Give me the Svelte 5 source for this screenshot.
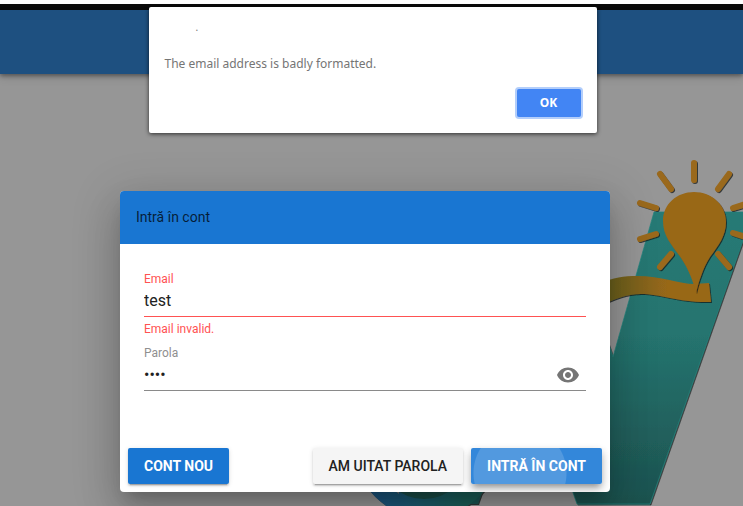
<script>
  let email = $state('test');
  let password = $state('pass');
  let visible = $state(false);

  const rays = [
    [694, 163, 694, 180],
    [660, 174, 671, 189],
    [729, 174, 718, 189],
    [640, 203, 656, 208],
    [640, 239, 656, 234],
    [671, 254, 660, 267],
    [718, 254, 729, 267],
    [733, 208, 749, 203],
    [733, 233, 749, 238]
  ];
</script>

<div class="page">
  <div class="browser-edge"></div>
  <header class="toolbar"></header>

  <svg class="art" viewBox="360 150 383 356" aria-hidden="true">
    <defs>
      <linearGradient id="teal" x1="0" y1="0" x2="0" y2="1">
        <stop offset="0" stop-color="#267a75" />
        <stop offset=".42" stop-color="#25746f" />
        <stop offset="1" stop-color="#1d524f" />
      </linearGradient>
      <linearGradient id="ribbon" gradientUnits="userSpaceOnUse" x1="606" y1="0" x2="668" y2="0">
        <stop offset="0" stop-color="#67601f" />
        <stop offset="1" stop-color="#986719" />
      </linearGradient>
      <linearGradient id="ring" gradientUnits="userSpaceOnUse" x1="368" y1="0" x2="465" y2="0">
        <stop offset="0" stop-color="#1c5583" />
        <stop offset=".4" stop-color="#1c5a74" />
        <stop offset="1" stop-color="#1f5f58" />
      </linearGradient>
      <filter id="edge" x="-20%" y="-20%" width="150%" height="150%">
        <feDropShadow dx="1" dy="1" stdDeviation=".6" flood-color="#161a1a" flood-opacity=".75" />
      </filter>
    </defs>
    <g filter="url(#edge)">
      <path d="M654 212H753L650 504H577L540 400L590 290L613 357Z" fill="url(#teal)" stroke="#22857e" stroke-width=".7" />
      <path d="M430 400H515L478 504H430Z" fill="#1e5552" />
      <circle cx="427" cy="444" r="74" fill="url(#ring)" />
      <ellipse cx="424" cy="459" rx="43" ry="40" fill="#1b4f48" />
      <path d="M394 490h5v4z" fill="#777" />
    </g>
    <path
      d="M600 284C613 277 624 276 637 276C661 276 680 284 694 284L709 283L711 302C680 303 661 294 641 294C626 294 614 299 600 306Z"
      fill="url(#ribbon)"
      filter="url(#edge)"
    />
    <g stroke="#9a691b" stroke-width="6" stroke-linecap="round" filter="url(#edge)">
      {#each rays as [x1, y1, x2, y2]}
        <line {x1} {y1} {x2} {y2} />
      {/each}
    </g>
    <path
      d="M694 192C712 192 726 205 726 222C726 236 718 246 710 257C703 268 699 281 696 293C693 281 689 270 681 258C671 244 663 236 663 221C663 204 677 192 694 192Z"
      fill="#996719"
      filter="url(#edge)"
    />
  </svg>

  <main class="stage">
    <form class="card" novalidate onsubmit={(event) => event.preventDefault()}>
      <h1>Intră în cont</h1>
      <div class="fields">
        <div class="field invalid">
          <label for="email">Email</label>
          <div class="control">
            <input id="email" type="email" bind:value={email} aria-invalid="true" aria-describedby="email-error" />
          </div>
          <p id="email-error">Email invalid.</p>
        </div>
        <div class="field">
          <label for="password">Parola</label>
          <div class="control">
            <input id="password" type={visible ? 'text' : 'password'} bind:value={password} />
            <button class="eye" type="button" aria-label="Arată parola" onclick={() => (visible = !visible)}>
              <svg viewBox="0 0 24 24" aria-hidden="true">
                <path
                  d="M12 4.5C7 4.5 2.73 7.61 1 12c1.73 4.39 6 7.5 11 7.5s9.27-3.11 11-7.5c-1.73-4.39-6-7.5-11-7.5zM12 17c-2.76 0-5-2.24-5-5s2.24-5 5-5 5 2.24 5 5-2.24 5-5 5zm0-8c-1.66 0-3 1.34-3 3s1.34 3 3 3 3-1.34 3-3-1.34-3-3-3z"
                />
              </svg>
            </button>
          </div>
        </div>
      </div>
      <div class="actions">
        <button class="btn primary" type="button">Cont nou</button>
        <span class="spacer"></span>
        <button class="btn" type="button">Am uitat parola</button>
        <button class="btn primary pressed" type="submit">Intră în cont</button>
      </div>
    </form>
  </main>

  <div class="alert" role="alertdialog" aria-labelledby="alert-title" aria-describedby="alert-text">
    <div class="alert-title" id="alert-title">.</div>
    <p id="alert-text">The email address is badly formatted.</p>
    <button type="button">OK</button>
  </div>
</div>

<style>
  :global(body) {
    margin: 0;
  }
  .page {
    position: relative;
    min-height: 100vh;
    overflow: hidden;
    background: #969696;
    font-family: Roboto, 'Liberation Sans', sans-serif;
    box-sizing: border-box;
  }
  .page :global(*) {
    box-sizing: border-box;
  }
  .browser-edge {
    height: 10px;
    border-top: 4px solid #fff;
    background: #0b0b0b;
  }
  .toolbar {
    height: 64px;
    background: #1e5080;
    box-shadow: 0 2px 4px rgba(0, 0, 0, 0.35), 0 3px 9px rgba(0, 0, 0, 0.15);
  }
  .art {
    position: absolute;
    top: 150px;
    right: 0;
    width: 383px;
    height: 356px;
  }
  .stage {
    position: relative;
    display: flex;
    justify-content: center;
    padding: 117px 13px 14px 0;
  }
  .card {
    width: 490px;
    max-width: 100%;
    border-radius: 4px;
    overflow: hidden;
    background: #fff;
    box-shadow:
      0 11px 15px -7px rgba(0, 0, 0, 0.2),
      0 24px 38px 3px rgba(0, 0, 0, 0.14),
      0 9px 46px 8px rgba(0, 0, 0, 0.12);
  }
  h1 {
    margin: 0;
    padding: 16px;
    background: #1976d2;
    color: rgba(0, 0, 0, 0.75);
    font-size: 14px;
    font-weight: 400;
    line-height: 21px;
  }
  .fields {
    padding: 24px;
  }
  .field {
    height: 74px;
    padding-top: 4px;
    color: #8f8f8f;
  }
  label,
  .field p {
    display: block;
    margin: 0;
    font-size: 12px;
    line-height: 14px;
  }
  .field p {
    padding-top: 5px;
  }
  .control {
    display: flex;
    align-items: center;
    height: 31px;
    border-bottom: 1px solid #8a8a8a;
  }
  .invalid {
    color: #ff5252;
  }
  .invalid .control {
    border-color: #ff5252;
  }
  input {
    flex: 1;
    min-width: 0;
    height: 30px;
    padding: 0 0 2px;
    border: 0;
    outline: 0;
    background: none;
    color: #212121;
    font: 16px/28px Roboto, 'Liberation Sans', sans-serif;
  }
  .eye {
    width: 24px;
    height: 24px;
    margin-right: 6px;
    padding: 0;
    border: 0;
    background: none;
  }
  .eye svg {
    display: block;
    fill: #757575;
  }
  .actions {
    display: flex;
    gap: 8px;
    padding: 8px;
  }
  .spacer {
    flex: 1;
  }
  .btn {
    height: 36px;
    padding: 0 16px;
    border: 0;
    border-radius: 2px;
    background: #f5f5f5;
    color: #212121;
    font: 500 14px/34px Roboto, 'Liberation Sans', sans-serif;
    text-transform: uppercase;
    box-shadow:
      0 3px 1px -2px rgba(0, 0, 0, 0.2),
      0 2px 2px rgba(0, 0, 0, 0.14),
      0 1px 5px rgba(0, 0, 0, 0.12);
  }
  .primary {
    background: #1976d2;
    color: #fff;
    font-weight: 700;
  }
  .pressed {
    background: radial-gradient(circle 47px at 49px 25px, #5299df 46px, #3387da 47px);
    box-shadow:
      0 5px 5px -3px rgba(0, 0, 0, 0.2),
      0 5px 8px rgba(0, 0, 0, 0.2),
      0 3px 10px rgba(0, 0, 0, 0.12);
  }
  .alert {
    position: absolute;
    top: 7px;
    left: calc(50% + 1px);
    width: 448px;
    max-width: 100%;
    transform: translateX(-50%);
    display: flex;
    flex-direction: column;
    padding: 12px 16px 16px;
    border-radius: 2px;
    background: #fff;
    color: #757575;
    font: 12px/18px 'Noto Sans', 'Open Sans', sans-serif;
    box-shadow: 0 1px 4px rgba(0, 0, 0, 0.7);
  }
  .alert-title {
    padding-left: 31px;
    font-size: 10px;
    line-height: 16px;
  }
  .alert p {
    margin: 20px 0 16px;
  }
  .alert button {
    align-self: flex-end;
    width: 64px;
    height: 28px;
    padding: 0;
    border: 0;
    border-radius: 2px;
    background: #4285f4;
    color: #fff;
    font: 700 12px/28px 'Noto Sans', 'Open Sans', sans-serif;
    box-shadow: 0 0 0 2px #b3cefb;
  }
</style>
